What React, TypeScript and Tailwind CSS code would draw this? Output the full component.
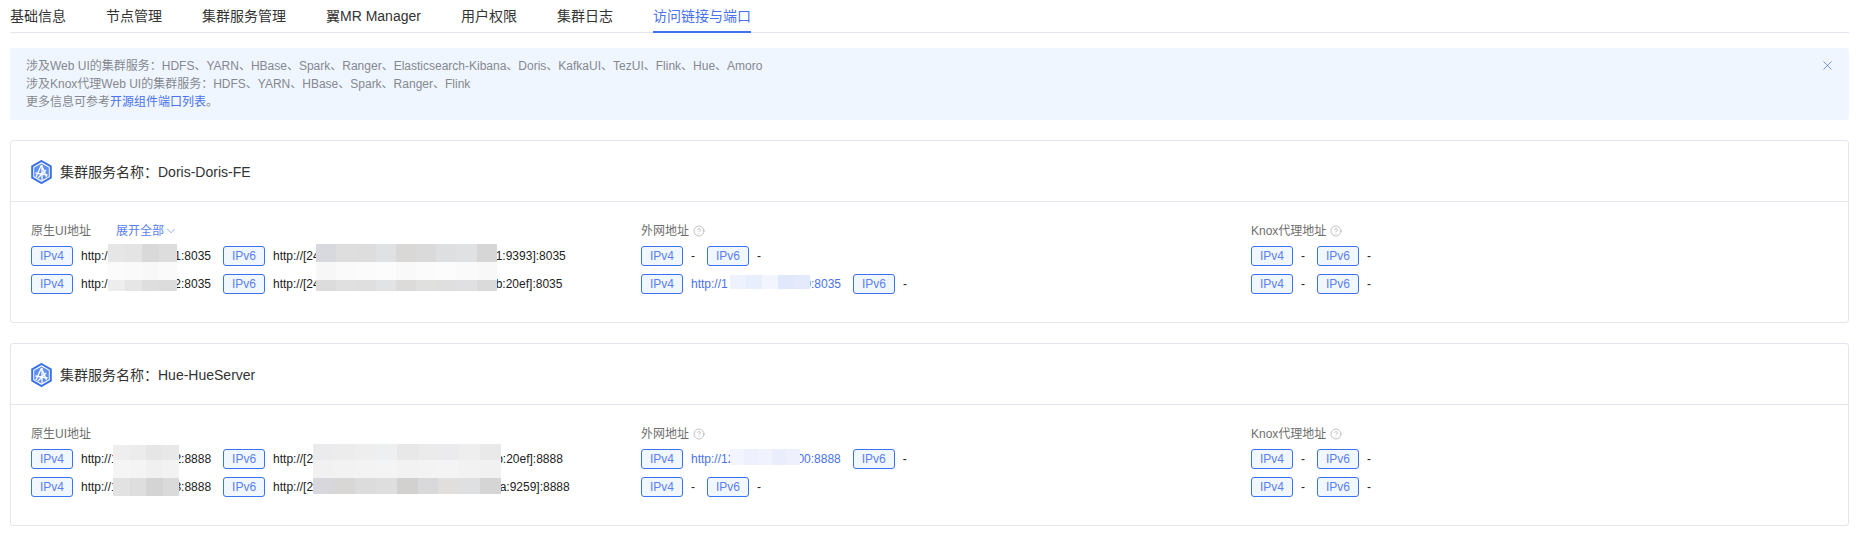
import { ChevronDown, CircleHelp, X } from 'lucide-react'

const FONT = "font-['Liberation_Sans','Noto_Sans_CJK_SC',sans-serif]"

const TABS = ['基础信息', '节点管理', '集群服务管理', '翼MR Manager', '用户权限', '集群日志', '访问链接与端口']

// width = space taken in the line, paint = the mosaic drawn over it
type Mask = {
  width: number
  paint?: { left: number; top: number; width: number; rowHeights: number[]; rows: string[][] }
}

function ClusterIcon() {
  return (
    <svg width="21" height="24" viewBox="0 0 21 24" className="shrink-0">
      <path d="M10.5 1 L19.8 6.4 V17.6 L10.5 23 L1.2 17.6 V6.4 Z" fill="#ffffff" stroke="#3a70ee" strokeWidth="2" />
      <path d="M10.5 3.4 L17.8 7.6 V16.4 L10.5 20.6 L3.2 16.4 V7.6 Z" fill="#5f90f4" />
      <path d="M10.5 5 L5 17 M10.5 5 L15.5 17 M4.5 13 L16.5 15 M11 5 V20 M7 18 L15 10" stroke="#ffffff" strokeWidth="1.3" fill="none" />
    </svg>
  )
}

function Tag({ label }: { label: string }) {
  return (
    <span className="flex h-5 w-[42px] shrink-0 items-center justify-center rounded-[3px] border border-[#3b72f0] bg-[#f1f7ff] text-xs text-[#5b7ff0]">
      {label}
    </span>
  )
}

function Masked({ mask }: { mask: Mask }) {
  const paint = mask.paint
  return (
    <span className="relative inline-block h-4 shrink-0" style={{ width: mask.width }}>
      {paint && (
        <span className="absolute flex flex-col" style={{ left: paint.left, top: paint.top, width: paint.width }}>
          {paint.rows.map((row, i) => (
            <span key={i} className="flex" style={{ height: paint.rowHeights[i] }}>
              {row.map((color, j) => (
                <span key={j} className="flex-1" style={{ background: color }} />
              ))}
            </span>
          ))}
        </span>
      )}
    </span>
  )
}

function Address({ label, before, after, mask, link }: { label: string; before?: string; after?: string; mask?: Mask; link?: boolean }) {
  return (
    <div className="flex items-center">
      <Tag label={label} />
      <div className={`ml-2 mr-3 flex items-center whitespace-nowrap text-xs ${link ? 'text-[#4a72ee]' : 'text-[#222222]'}`}>
        {before ?? '-'}
        {mask && <Masked mask={mask} />}
        {after}
      </div>
    </div>
  )
}

function Column({ title, help, extra, rows }: { title: string; help?: boolean; extra?: boolean; rows: React.ReactNode[] }) {
  return (
    <div>
      <div className="mb-[6px] flex h-[18px] items-center text-xs text-[#6e6e6e]">
        {title}
        {help && <CircleHelp size={12} strokeWidth={1.2} className="ml-[4px] text-[#999999]" />}
        {extra && (
          <span className="ml-[25px] flex items-center text-[#5b7ff0]">
            展开全部
            <ChevronDown size={14} strokeWidth={1.1} />
          </span>
        )}
      </div>
      <div className="flex flex-col gap-2">
        {rows.map((row, i) => (
          <div key={i} className="flex h-5 items-center">{row}</div>
        ))}
      </div>
    </div>
  )
}

function Card({ name, cols }: { name: string; cols: React.ReactNode[] }) {
  return (
    <section className="rounded-[3px] border border-[#e4e6ef] bg-white">
      <header className="flex h-[61px] items-center gap-2 border-b border-[#e4e6ef] pl-5 pt-[2px] text-sm text-[#333333]">
        <ClusterIcon />
        集群服务名称：{name}
      </header>
      <div className="grid h-[120px] grid-cols-[610px_610px_1fr] pl-5 pt-5">{cols}</div>
    </section>
  )
}

const knoxRow = (
  <>
    <Address label="IPv4" />
    <Address label="IPv6" />
  </>
)

const knox = <Column key="knox" title="Knox代理地址" help rows={[knoxRow, knoxRow]} />

const dorisShort: Mask = {
  width: 66.6,
  paint: {
    left: 0, top: -4, width: 69, rowHeights: [18, 18, 11],
    rows: [
      ['#e6e6e6', '#e4e4e4', '#d9d9d9', '#dddddd'],
      ['#fbfbfb', '#fafafa', '#f8f8f8', '#fafafa'],
      ['#ededed', '#e6e6e6', '#dedede', '#dcdcdc'],
    ],
  },
}

const dorisLong: Mask = {
  width: 176,
  paint: {
    left: -4, top: -4, width: 181, rowHeights: [18, 18, 11],
    rows: [
      ['#d8d9de', '#dedede', '#dddddd', '#e0e1e3', '#d9d8d6', '#dadada', '#dedfe0', '#e0e1e2', '#d6d6d6'],
      ['#f7f7f7', '#fafafa', '#fbfbfb', '#fcfcfc', '#f9f9f9', '#fbfbfb', '#fcfcfc', '#fafafa', '#f8f8f8'],
      ['#dcdcdc', '#e0e0e0', '#dfdfdf', '#e2e3e5', '#dcdbd9', '#e0e0de', '#dfdfdf', '#e0e0e2', '#dadada'],
    ],
  },
}

const hueShort: Mask = {
  width: 56.7,
  paint: {
    left: -4.7, top: -6, width: 66, rowHeights: [15, 18, 18],
    rows: [
      ['#eeeeee', '#ececec', '#e6e6e6', '#e8e8e8'],
      ['#f5f5f5', '#f4f4f4', '#f0f0f0', '#f2f2f2'],
      ['#e2e2e2', '#dedede', '#d4d4d4', '#dadada'],
    ],
  },
}

const hueLong: Mask = {
  width: 183,
  paint: {
    left: 0, top: -7, width: 188, rowHeights: [16, 18, 16],
    rows: [
      ['#ebebed', '#ececec', '#eeeeee', '#eeeff1', '#e8e8e8', '#ebebeb', '#ebebed', '#eeeeee', '#e9e9e9'],
      ['#f1f1f1', '#f2f2f2', '#f3f3f3', '#f4f4f4', '#f2f2f2', '#f3f3f3', '#f4f4f4', '#f2f2f2', '#f1f1f1'],
      ['#d8d8dc', '#d8d7d5', '#dcdcdc', '#dededf', '#d2d1cf', '#d9d9dc', '#e0dfdd', '#dfe0e2', '#d5d5d5'],
    ],
  },
}

const dorisLink: Mask = {
  width: 76.6,
  paint: {
    left: 2, top: -1, width: 80, rowHeights: [14],
    rows: [['#eef2fe', '#e9eefd', '#f2f5fe', '#e2e8fb', '#e4e9fb']],
  },
}

const hueLink: Mask = {
  width: 63,
  paint: {
    left: -4.7, top: -2, width: 70, rowHeights: [16],
    rows: [['#f2f4fe', '#eef1fd', '#f0f3fe', '#eaeefc', '#eef1fd']],
  },
}

const dorisCols = [
  <Column
    key="ui"
    title="原生UI地址"
    extra
    rows={[
      <>
        <Address label="IPv4" before="http:/" mask={dorisShort} after="1:8035" />
        <Address label="IPv6" before="http://[24" mask={dorisLong} after="1:9393]:8035" />
      </>,
      <>
        <Address label="IPv4" before="http:/" mask={{ width: 66.6 }} after="2:8035" />
        <Address label="IPv6" before="http://[24" mask={{ width: 176 }} after="b:20ef]:8035" />
      </>,
    ]}
  />,
  <Column
    key="net"
    title="外网地址"
    help
    rows={[
      <>
        <Address label="IPv4" />
        <Address label="IPv6" />
      </>,
      <>
        <Address label="IPv4" before="http://1" mask={dorisLink} after="0:8035" link />
        <Address label="IPv6" />
      </>,
    ]}
  />,
  knox,
]

const hueCols = [
  <Column
    key="ui"
    title="原生UI地址"
    rows={[
      <>
        <Address label="IPv4" before="http://1" mask={hueShort} after="2:8888" />
        <Address label="IPv6" before="http://[2" mask={hueLong} after="b:20ef]:8888" />
      </>,
      <>
        <Address label="IPv4" before="http://1" mask={{ width: 56.7 }} after="3:8888" />
        <Address label="IPv6" before="http://[2" mask={{ width: 186.5 }} after="a:9259]:8888" />
      </>,
    ]}
  />,
  <Column
    key="net"
    title="外网地址"
    help
    rows={[
      <>
        <Address label="IPv4" before="http://12" mask={hueLink} after="00:8888" link />
        <Address label="IPv6" />
      </>,
      <>
        <Address label="IPv4" />
        <Address label="IPv6" />
      </>,
    ]}
  />,
  knox,
]

export default function App() {
  return (
    <main className={`h-[535px] overflow-hidden bg-white px-[10px] ${FONT}`}>
      <nav className="flex h-[33px] gap-10 border-b border-[#e4e6ef] text-sm text-[#333333]">
        {TABS.map((tab, i) => (
          <span
            key={tab}
            className={i === 6 ? 'h-[33px] border-b-2 border-[#3f74ee] pt-[6px] text-[#4a72ee]' : 'pt-[6px]'}
          >
            {tab}
          </span>
        ))}
      </nav>

      <div className="mt-[15px] flex h-[72px] items-start justify-between rounded-[3px] bg-[#eff6ff] py-[9px] pl-[16px] pr-[14px] text-xs leading-[18px] text-[#85888f]">
        <div>
          <p>涉及Web UI的集群服务：HDFS、YARN、HBase、Spark、Ranger、Elasticsearch-Kibana、Doris、KafkaUI、TezUI、Flink、Hue、Amoro</p>
          <p>涉及Knox代理Web UI的集群服务：HDFS、YARN、HBase、Spark、Ranger、Flink</p>
          <p>
            更多信息可参考<span className="text-[#4a72ee]">开源组件端口列表</span>。
          </p>
        </div>
        <X size={15} strokeWidth={1.2} className="mt-[1px] text-[#4a72ee]" />
      </div>

      <div className="mt-5 flex flex-col gap-5">
        <Card name="Doris-Doris-FE" cols={dorisCols} />
        <Card name="Hue-HueServer" cols={hueCols} />
      </div>
    </main>
  )
}
